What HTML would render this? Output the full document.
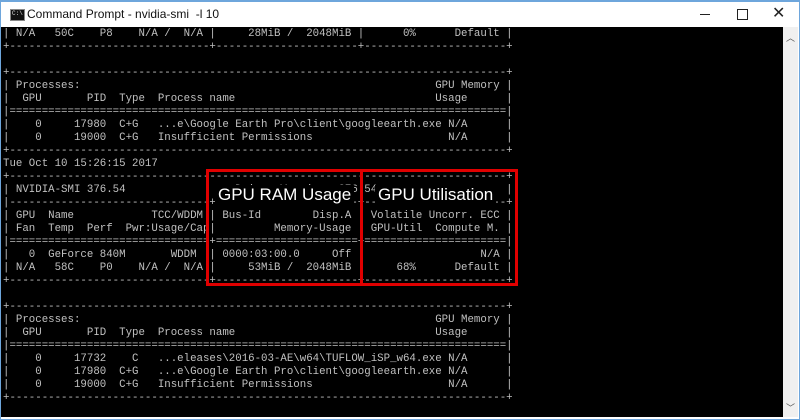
<!DOCTYPE html>
<html><head><meta charset="utf-8"><style>
body{margin:0;width:800px;height:420px;overflow:hidden;background:#fff;position:relative;font-family:"Liberation Sans",sans-serif}
.frame{position:absolute;left:0;top:0;width:798px;height:417px;border:1px solid #6ea6dc;border-top:2px solid #6ea6dc;background:#fff}
.title{position:absolute;left:27px;top:7px;font-size:12px;color:#111}
.icon{position:absolute;left:10px;top:9px;width:13px;height:10px;background:#111;border:1px solid #888}
.icon span{position:absolute;left:1px;top:0;color:#ddd;font-size:6px;font-family:"Liberation Mono",monospace}
.term{position:absolute;left:1px;top:27px;width:782px;height:390px;background:#000;overflow:hidden}
pre{margin:0;position:absolute;left:2px;top:1px;font-family:"Liberation Mono",monospace;font-size:10.75px;line-height:13px;color:#c0c0c0;white-space:pre}
.sb{position:absolute;left:783px;top:27px;width:15px;height:390px;background:#f0f0f0}
.box{position:absolute;border:3px solid #e00000;box-sizing:border-box}
.lab{position:absolute;color:#fff;background:#000;font-size:17px;padding:0 3px}
</style></head><body>
<div class="frame"></div>
<div class="icon"><span>C:\</span></div>
<div class="title">Command Prompt - nvidia-smi &nbsp;-l 10</div>
<div style="position:absolute;left:700px;top:14px;width:10px;height:1px;background:#222"></div>
<div style="position:absolute;left:737px;top:9px;width:9px;height:9px;border:1px solid #222"></div>
<div style="position:absolute;left:772px;top:3px;font-size:16px;color:#222">✕</div>
<div class="term"><pre>| N/A   50C    P8    N/A /  N/A |     28MiB /  2048MiB |      0%      Default |
+-------------------------------+----------------------+----------------------+

+-----------------------------------------------------------------------------+
| Processes:                                                       GPU Memory |
|  GPU       PID  Type  Process name                               Usage      |
|=============================================================================|
|    0     17980  C+G   ...e\Google Earth Pro\client\googleearth.exe N/A      |
|    0     19000  C+G   Insufficient Permissions                     N/A      |
+-----------------------------------------------------------------------------+
Tue Oct 10 15:26:15 2017
+-----------------------------------------------------------------------------+
| NVIDIA-SMI 376.54                 Driver Version: 376.54                    |
|-------------------------------+----------------------+----------------------+
| GPU  Name            TCC/WDDM | Bus-Id        Disp.A | Volatile Uncorr. ECC |
| Fan  Temp  Perf  Pwr:Usage/Cap|         Memory-Usage | GPU-Util  Compute M. |
|===============================+======================+======================|
|   0  GeForce 840M       WDDM  | 0000:03:00.0     Off |                  N/A |
| N/A   58C    P0    N/A /  N/A |     53MiB /  2048MiB |     68%      Default |
+-------------------------------+----------------------+----------------------+

+-----------------------------------------------------------------------------+
| Processes:                                                       GPU Memory |
|  GPU       PID  Type  Process name                               Usage      |
|=============================================================================|
|    0     17732    C   ...eleases\2016-03-AE\w64\TUFLOW_iSP_w64.exe N/A      |
|    0     17980  C+G   ...e\Google Earth Pro\client\googleearth.exe N/A      |
|    0     19000  C+G   Insufficient Permissions                     N/A      |
+-----------------------------------------------------------------------------+</pre></div>
<div class="sb"><div style="position:absolute;left:3px;top:4px;font-size:9px;color:#555">︿</div><div style="position:absolute;left:3px;top:374px;font-size:9px;color:#555">﹀</div></div>
<div class="lab" style="left:215px;top:185px">GPU RAM Usage</div>
<div class="lab" style="left:375px;top:185px">GPU Utilisation</div>
<div class="box" style="left:206px;top:169px;width:157px;height:117px"></div>
<div class="box" style="left:360px;top:169px;width:158px;height:117px"></div>
</body></html>
